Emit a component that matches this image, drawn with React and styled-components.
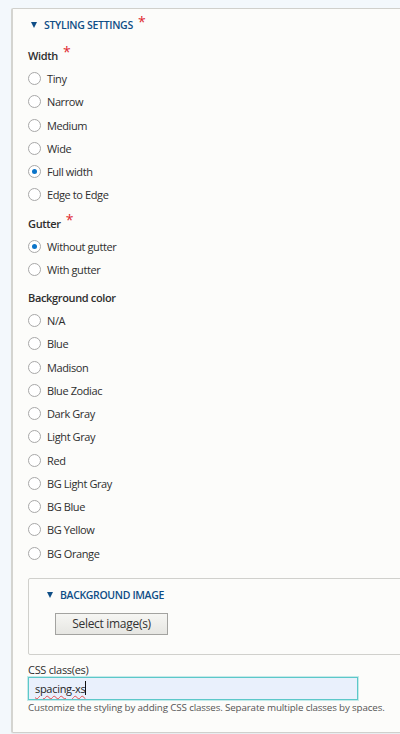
import React from 'react'
import styled, { createGlobalStyle } from 'styled-components'

const GlobalStyle = createGlobalStyle`
    body{
        margin:0;
        background:#f3f8fc;
        font-family:"Open Sans", "DejaVu Sans", sans-serif;
        color:#222;
        overflow:hidden;
    }
`

const groups = [
    { label: 'Width', required: true, options: ['Tiny', 'Narrow', 'Medium', 'Wide', 'Full width', 'Edge to Edge'], checked: 'Full width' },
    { label: 'Gutter', required: true, options: ['Without gutter', 'With gutter'], checked: 'Without gutter' },
    { label: 'Background color', options: ['N/A', 'Blue', 'Madison', 'Blue Zodiac', 'Dark Gray', 'Light Gray', 'Red', 'BG Light Gray', 'BG Blue', 'BG Yellow', 'BG Orange'] },
]

function App() {
    return (
        <Page>
            <GlobalStyle />
            <Fieldset>
                <Summary>
                    <Arrow />
                    STYLING SETTINGS
                    <Star>*</Star>
                </Summary>
                <Body>
                    {groups.map((g) => (
                        <Group key={g.label}>
                            <GroupLabel>
                                {g.label}
                                {g.required && <Star>*</Star>}
                            </GroupLabel>
                            {g.options.map((o) => (
                                <Option key={o}>
                                    <Radio checked={g.checked === o} />
                                    {o}
                                </Option>
                            ))}
                        </Group>
                    ))}
                    <Inner>
                        <InnerSummary>
                            <Arrow />
                            BACKGROUND IMAGE
                        </InnerSummary>
                        <Button>Select image(s)</Button>
                    </Inner>
                    <FieldLabel>CSS class(es)</FieldLabel>
                    <Input>
                        <Typed>spacing-xs</Typed>
                        <Caret />
                    </Input>
                    <Description>Customize the styling by adding CSS classes. Separate multiple classes by spaces.</Description>
                </Body>
            </Fieldset>
        </Page>
    )
}

export default App

const Page = styled.div`
    padding:8px 0 0 11px;
    width:400px;
    height:734px;
    box-sizing:border-box;
    overflow:hidden;
`

const Fieldset = styled.div`
    width:420px;
    height:725px;
    box-sizing:border-box;
    background:#fcfcfa;
    border:1px solid #d0d0cc;
    border-left:2px solid #d4d4d0;
    border-radius:2px;
    box-shadow:0 1px 1px rgba(0,0,0,.05);
`

const Summary = styled.div`
    display:flex;
    align-items:center;
    height:16px;
    margin:8px 0 0 18px;
    font-size:10.5px;
    font-weight:600;
    letter-spacing:-.3px;
    color:#0f4e86;
`

const Arrow = styled.span`
    width:0;
    height:0;
    border-left:3.5px solid transparent;
    border-right:3.5px solid transparent;
    border-top:6px solid #0f4e86;
    margin-right:7px;
`

const Star = styled.span`
    color:#e0282f;
    font-size:14px;
    font-weight:400;
    margin-left:5px;
    position:relative;
    top:-4px;
`

const Body = styled.div`
    padding:6px 0 0 15px;
    display:flex;
    flex-direction:column;
`

const Group = styled.div`
    display:flex;
    flex-direction:column;
    margin-top:5px;
`

const GroupLabel = styled.div`
    display:flex;
    align-items:center;
    height:23px;
    font-size:11px;
    font-weight:600;
    letter-spacing:-.35px;
    color:#2e2e2e;
`

const Option = styled.div`
    display:flex;
    align-items:center;
    height:23.25px;
    font-size:11px;
    letter-spacing:-.4px;
    color:#2e2e2e;
`

const Radio = styled.span`
    width:13px;
    height:13px;
    box-sizing:border-box;
    border-radius:50%;
    border:1px solid #a8a8a8;
    background:#fff;
    margin-right:6px;
    display:flex;
    align-items:center;
    justify-content:center;
    &::after{
        content:'';
        width:5px;
        height:5px;
        border-radius:50%;
        background:${props => props.checked ? '#0a74c9' : 'transparent'};
    }
`

const Inner = styled.div`
    margin:13px 0 0 0;
    height:77px;
    box-sizing:border-box;
    border:1px solid #d0d0cc;
    border-radius:2px;
    padding:8px 0 0 18px;
`

const InnerSummary = styled(Summary)`
    margin:0;
    letter-spacing:-.35px;
`

const Button = styled.div`
    margin:10px 0 0 8px;
    width:113px;
    height:22px;
    box-sizing:border-box;
    display:flex;
    align-items:center;
    justify-content:center;
    font-size:12px;
    letter-spacing:-.3px;
    color:#333;
    border:1px solid #a3a3a0;
    background:linear-gradient(#f6f6f3,#e6e6e2);
`

const FieldLabel = styled.div`
    margin-top:8px;
    height:14px;
    display:flex;
    align-items:center;
    font-size:11px;
    letter-spacing:-.3px;
    color:#2e2e2e;
`

const Input = styled.div`
    width:330px;
    height:23px;
    box-sizing:border-box;
    border:1px solid #5cc8c9;
    box-shadow:0 0 0 1px rgba(92,200,201,.35);
    background:#e9f0fc;
    display:flex;
    align-items:center;
    padding-left:6px;
    font-size:11px;
    letter-spacing:-.3px;
    color:#222;
`

const Typed = styled.span`
    text-decoration:underline wavy #e05050;
    text-decoration-thickness:1px;
    text-underline-offset:2px;
`

const Caret = styled.span`
    width:1px;
    height:14px;
    background:#111;
`

const Description = styled.div`
    margin-top:1px;
    font-size:9.8px;
    letter-spacing:-.15px;
    color:#555;
    white-space:nowrap;
`
